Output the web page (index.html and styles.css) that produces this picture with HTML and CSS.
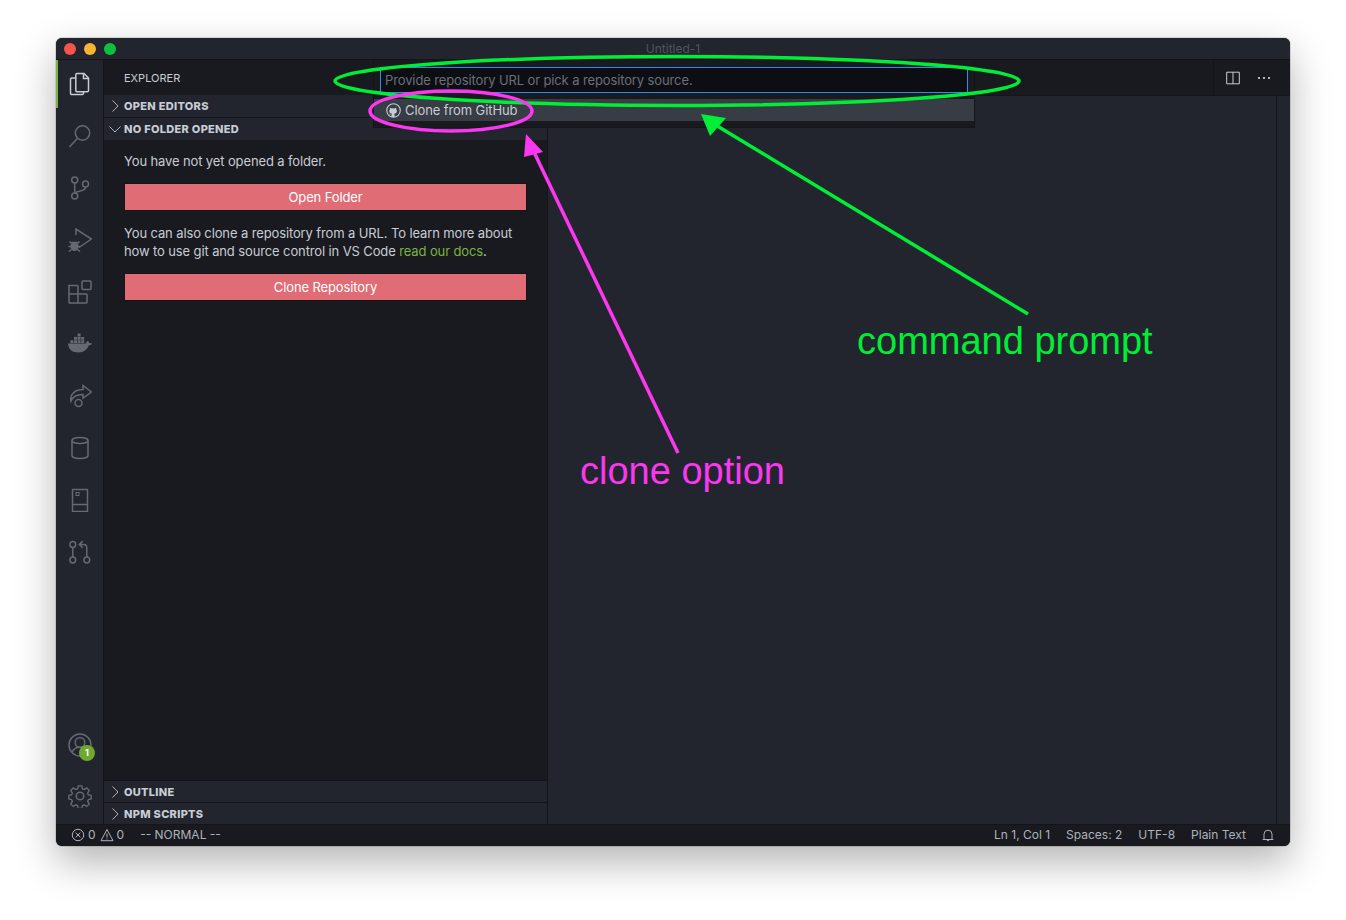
FILE: index.html
```html
<!DOCTYPE html>
<html lang="en">
<head>
<meta charset="utf-8">
<title>Untitled-1</title>
<link rel="stylesheet" href="styles.css">
</head>
<body>
<div class="window">
  <header class="titlebar">
    <div class="lights"><span class="light red"></span><span class="light yellow"></span><span class="light green"></span></div>
    <div class="title">Untitled-1</div>
  </header>
  <div class="main">
    <nav class="activity">
      <div class="act-top">
        <div class="act-item active"><svg viewBox="0 0 24 24" class="ic bright"><path d="M9 1.500h7l4.500 4.500v12.500a1.200 1.200 0 0 1-1.200 1.200H9a1.200 1.200 0 0 1-1.200-1.200V2.700A1.200 1.200 0 0 1 9 1.500z"/><path d="M15.500 1.500v5h5"/><path d="M7.800 6H3.700a1.200 1.200 0 0 0-1.200 1.200v14.100a1.200 1.200 0 0 0 1.200 1.200h10.600a1.200 1.200 0 0 0 1.200-1.200v-1.600"/></svg></div>
        <div class="act-item"><svg viewBox="0 0 24 24" class="ic"><circle cx="14.500" cy="9" r="7.200"/><path d="M9.500 14.200 1.500 23"/></svg></div>
        <div class="act-item"><svg viewBox="0 0 24 24" class="ic"><circle cx="6.700" cy="4" r="3"/><circle cx="6.700" cy="20" r="3"/><circle cx="17.500" cy="8" r="3"/><path d="M6.700 7v10M17.500 11c0 3.300-3.500 3.700-6 4.200-2.200.4-4 .8-4.800 1.800"/></svg></div>
        <div class="act-item"><svg viewBox="0 0 24 24" class="ic"><path d="M8 7V1L23.500 11 11 19.500"/><ellipse cx="6.500" cy="18.500" rx="3.300" ry="3.800" class="bug"/><path d="M3.500 14.500h6M1.500 13.500l2 2M11.500 13.500l-2 2M.5 18.500h2.500M10 18.500h2.500M1 23.500l2.500-2M12 23.500l-2.500-2"/></svg></div>
        <div class="act-item"><svg viewBox="0 0 24 24" class="ic"><path d="M1 5.500h8.200a.8.800 0 0 1 .8.800v16.700H1.800a.8.800 0 0 1-.8-.8z"/><path d="M1 14h17.200a.8.800 0 0 1 .8.800v7.400a.8.800 0 0 1-.8.800H10"/><rect x="14" y="1" width="9" height="8.500" rx="1"/></svg></div>
        <div class="act-item"><svg viewBox="0 0 24 24" class="ic solid"><path d="M0 11.500h18c.1-1.300 1-2.500 2-2.500.7.500 1.100 1.400 1.100 2.200.9-.3 2.200-.2 2.900.6-.7 1.200-1.900 1.500-3.200 1.500-1.400 4.100-5 7.200-10.300 7.200C4 20.500.4 17.300 0 11.500z"/><path d="M2.400 8.200h3v2.800h-3zM6 8.200h3v2.800H6zM9.600 8.200h3v2.800h-3zM13.200 8.200h3v2.800h-3zM6 4.900h3v2.800H6zM9.600 4.900h3v2.800h-3zM13.200 4.900h3v2.800h-3zM9.600 1.600h3v2.800h-3z"/></svg></div>
        <div class="act-item"><svg viewBox="0 0 24 24" class="ic"><path d="M15 1.500 23.500 8 15 14v-3.500c-5 0-10 1-12 6.500C1.500 10 7.500 5.500 15 5.500z"/><circle cx="10.500" cy="19" r="3.500"/></svg></div>
        <div class="act-item"><svg viewBox="0 0 24 24" class="ic"><ellipse cx="12" cy="4.500" rx="8" ry="3"/><path d="M4 4.500v15c0 1.700 3.600 3 8 3s8-1.300 8-3v-15"/></svg></div>
        <div class="act-item"><svg viewBox="0 0 24 24" class="ic"><rect x="4.500" y="1.500" width="15" height="22"/><path d="M4.500 16.500h15"/><rect x="8" y="4.500" width="3" height="3" class="thin"/></svg></div>
        <div class="act-item"><svg viewBox="0 0 24 24" class="ic"><circle cx="4.800" cy="4.500" r="2.900"/><circle cx="4.800" cy="20" r="2.900"/><circle cx="18.800" cy="20" r="2.900"/><path d="M4.800 7.400v9.700M18.800 17.100V8c0-2-1-3.500-3-3.500h-4M14.800 1 11.300 4.500 14.800 8"/></svg></div>
      </div>
      <div class="act-bottom">
        <div class="act-item account"><svg viewBox="0 0 24 24" class="ic"><circle cx="12" cy="12" r="11"/><circle cx="12" cy="9.500" r="4.800"/><path d="M3.800 19.500c1.500-3.500 4.500-5.300 8.200-5.300s6.700 1.800 8.200 5.300"/></svg><span class="badge">1</span></div>
        <div class="act-item"><svg viewBox="0 0 24 24" class="ic"><path d="M10 .8h4l.6 3.200 2 .9 2.800-1.800 2.800 2.800-1.800 2.800.8 2 3 .6v4l-3 .6-.8 2 1.800 2.800-2.800 2.800-2.800-1.800-2 .9-.6 3h-4l-.6-3-2-.9-2.800 1.800-2.800-2.800 1.800-2.800-.9-2-3-.6v-4l3-.6.9-2-1.800-2.800 2.800-2.800 2.800 1.800 2-.9z" transform="translate(1.100 1.100) scale(.91)"/><circle cx="12" cy="12" r="3.800"/></svg></div>
      </div>
    </nav>
    <aside class="sidebar">
      <div class="side-head">EXPLORER</div>
      <div class="sec first"><svg class="chev" viewBox="0 0 12 12"><path d="M3.500 .5 9 6 3.500 11.500"/></svg><span>OPEN EDITORS</span></div>
      <div class="sec open"><svg class="chev" viewBox="0 0 12 12"><path d="M.5 3.500 6 9 11.500 3.500"/></svg><span>NO FOLDER OPENED</span></div>
      <div class="welcome">
        <p class="line-one">You have not yet opened a folder.</p>
        <button class="btn">Open Folder</button>
        <p class="line-two">You can also clone a repository from a URL. To learn more about<br>how to use git and source control in VS Code <a class="link">read our docs</a>.</p>
        <button class="btn">Clone Repository</button>
      </div>
      <div class="sec tail"><svg class="chev" viewBox="0 0 12 12"><path d="M3.500 .5 9 6 3.500 11.500"/></svg><span>OUTLINE</span></div>
      <div class="sec tail"><svg class="chev" viewBox="0 0 12 12"><path d="M3.500 .5 9 6 3.500 11.500"/></svg><span>NPM SCRIPTS</span></div>
    </aside>
    <section class="editor">
      <div class="tabs">
        <div class="tab-actions">
          <svg viewBox="0 0 14 14" class="split"><path d="M.7 1.200h12.600v11.600H.7zM7 1.200v11.600"/></svg>
          <span class="more"><i></i><i></i><i></i></span>
        </div>
      </div>
      <div class="pane"><div class="scrollgutter"></div></div>
    </section>
  </div>
  <footer class="status">
    <div class="st-left">
      <span class="st-group"><svg viewBox="0 0 14 14" class="st-ic"><circle cx="7" cy="7" r="5.700"/><path d="M4.700 4.700l4.600 4.600M9.300 4.700 4.700 9.300"/></svg>0<svg viewBox="0 0 14 14" class="st-ic warn"><path d="M7 1.500 13 12.700H1zM7 5.500v4M7 10.500v1"/></svg>0</span>
      <span>-- NORMAL --</span>
    </div>
    <div class="st-right">
      <span>Ln 1, Col 1</span><span>Spaces: 2</span><span>UTF-8</span><span>Plain Text</span>
      <svg viewBox="0 0 14 14" class="st-ic bell"><path d="M3 10.500V6.200a4 4 0 0 1 8 0v4.300l1 1H2zM5.700 11.800a1.400 1.400 0 0 0 2.600 0"/></svg>
    </div>
  </footer>
  <div class="quick">
    <div class="quick-input">Provide repository URL or pick a repository source.</div>
    <div class="quick-row">
      <svg viewBox="0 0 16 16" class="gh"><circle cx="8" cy="8" r="7.200" class="gh-ring"/><path d="M5.800 15v-2.200c-1.800.3-2.300-.8-2.600-1.300.8 0 1.200.7 1.500 1 .4.300.9.200 1.200 0 0-.4.200-.8.500-1-1.800-.2-2.900-1.100-2.900-3 0-.7.200-1.300.7-1.800-.1-.5-.1-1.100.1-1.600.6 0 1.200.3 1.700.7a6.500 6.500 0 0 1 3.100 0c.5-.4 1.100-.7 1.700-.7.200.5.200 1.100.1 1.600.5.500.7 1.100.7 1.800 0 1.900-1.100 2.800-2.900 3 .3.300.5.700.5 1.300V15z"/></svg>
      <span>Clone from GitHub</span>
    </div>
  </div>
</div>
<svg class="marks" viewBox="0 0 1346 920" width="1346" height="920">
  <ellipse cx="677" cy="81" rx="342" ry="24.500" class="mark-green"/>
  <ellipse cx="451" cy="111" rx="81" ry="20" class="mark-pink"/>
  <path d="M1028 314 714 124" class="mark-green"/>
  <path d="M701 114 726 118 710 136z" class="fill-green"/>
  <path d="M678 453 533 150" class="mark-pink"/>
  <path d="M526 134 543 152 524 157z" class="fill-pink"/>
</svg>
<div class="note note-green">command prompt</div>
<div class="note note-pink">clone option</div>
</body>
</html>
```
FILE: styles.css
```css
* { box-sizing: border-box; }
html, body { margin: 0; height: 100%; }
body {
  width: 1346px;
  height: 920px;
  padding: 38px 56px 74px;
  background: #fff;
  font-family: Inter, "Liberation Sans", sans-serif;
  overflow: hidden;
  position: relative;
}
.window {
  position: relative;
  width: 1234px;
  height: 808px;
  display: flex;
  flex-direction: column;
  border-radius: 6px;
  overflow: hidden;
  background: #22252e;
  color: #c8ccd4;
  box-shadow: 0 0 0 1px rgba(0,0,0,.12), 0 16px 40px rgba(0,0,0,.3);
}
.titlebar {
  flex: 0 0 22px;
  display: flex;
  align-items: center;
  position: relative;
  background: #22252e;
  border-bottom: 1px solid #14151a;
}
.lights { display: flex; gap: 8px; padding-left: 8px; }
.light { width: 12px; height: 12px; border-radius: 50%; }
.red { background: #f5544d; }
.yellow { background: #f8b431; }
.green { background: #0dc13d; }
.title {
  position: absolute;
  left: 0; right: 0;
  text-align: center;
  font-size: 12px;
  color: #50545d;
}
.main { flex: 1; display: flex; min-height: 0; }
.activity {
  flex: 0 0 48px;
  display: flex;
  flex-direction: column;
  justify-content: space-between;
  background: #22252e;
  border-right: 1px solid #14151a;
}
.act-item {
  height: 52px;
  display: flex;
  align-items: center;
  justify-content: center;
  position: relative;
}
.act-top .act-item { border-left: 2px solid transparent; padding-right: 2px; }
.act-top .act-item.active { border-left-color: #7cb342; height: 48px; margin-bottom: 2px; }
.act-bottom { padding-bottom: 2px; }
.account { margin-bottom: -1px; }
.ic {
  width: 24px;
  height: 24px;
  fill: none;
  stroke: #646974;
  stroke-width: 1.500;
}
.ic.bright { stroke: #c8ccd4; }
.ic.solid { fill: #646974; stroke: none; }
.ic .thin { stroke-width: 1; }
.ic .bug { fill: #646974; }
.badge {
  position: absolute;
  left: 23px;
  top: 26px;
  width: 16px;
  height: 16px;
  border-radius: 50%;
  background: #6fa82f;
  color: #fff;
  font-size: 9px;
  font-weight: 700;
  line-height: 16px;
  text-align: center;
}
.sidebar {
  flex: 0 0 444px;
  display: flex;
  flex-direction: column;
  background: #191a1f;
  border-right: 1px solid #14151a;
}
.side-head {
  height: 35px;
  padding-left: 20px;
  line-height: 36px;
  font-size: 11px;
  color: #c8ccd4;
}
.sec {
  height: 22px;
  display: flex;
  align-items: center;
  background: #22252e;
  font-size: 11px;
  font-weight: 800;
  letter-spacing: .3px;
  color: #c8ccd4;
  border-bottom: 1px solid #14151a;
}
.sec.first { height: 23px; }
.sec.open { border-bottom: 0; }
.sec.tail { border-top: 1px solid #14151a; border-bottom: 0; }
.chev {
  width: 12px;
  height: 12px;
  margin: 0 3px 0 5px;
  fill: none;
  stroke: #aeb2ba;
  stroke-width: 1;
}
.welcome {
  flex: 1;
  padding: 12px 20px 0;
  font-size: 13px;
  line-height: 18px;
  letter-spacing: -.12px;
  color: #c8ccd4;
}
.welcome p { margin: 0; }
.welcome .line-one { height: 18px; margin-bottom: 13px; }
.welcome .line-two { margin: 13px 0; }
.btn {
  display: block;
  width: 403px;
  height: 28px;
  padding: 0;
  background: #e06c75;
  color: #fff;
  border: 1px solid #14151a;
  font: inherit;
  letter-spacing: inherit;
  text-align: center;
}
.link { color: #7cb342; }
.editor { flex: 1; display: flex; flex-direction: column; min-width: 0; }
.tabs {
  height: 36px;
  display: flex;
  justify-content: flex-end;
  background: #191a1f;
  border-bottom: 1px solid #14151a;
}
.tab-actions {
  width: 77px;
  border-left: 1px solid #14151a;
  display: flex;
  align-items: center;
  padding-left: 12px;
  gap: 18px;
  height: 35px;
}
.split { width: 14px; height: 14px; fill: none; stroke: #c8ccd4; stroke-width: 1; }
.more { display: flex; gap: 3px; }
.more i { width: 2px; height: 2px; background: #b0b3ba; }
.pane { flex: 1; background: #22252e; display: flex; justify-content: flex-end; }
.scrollgutter { width: 14px; border-left: 1px solid #14151a; }
.status {
  flex: 0 0 22px;
  display: flex;
  align-items: center;
  justify-content: space-between;
  background: #191a1f;
  border-top: 1px solid #14151a;
  font-size: 12px;
  color: #aeb2ba;
  padding: 0 15px 2px;
}
.st-left { display: flex; gap: 16px; align-items: center; }
.st-group { display: flex; align-items: center; gap: 3px; }
.st-right { display: flex; gap: 16px; align-items: center; }
.st-ic { width: 14px; height: 14px; fill: none; stroke: #aeb2ba; stroke-width: 1; }
.warn { margin-left: 1px; }
.bell { margin-left: -1px; }
.quick {
  position: absolute;
  left: 317px;
  top: 22px;
  width: 602px;
  height: 68px;
  padding: 6px 6px 0;
  background: #191a1f;
  border: 1px solid #14151a;
  border-top: 0;
}
.quick-input {
  height: 26px;
  margin-top: 1px;
  border: 1px solid #2d8cf0;
  background: #0d0e14;
  padding-left: 4px;
  font-size: 13px;
  line-height: 24px;
  letter-spacing: -.12px;
  color: #6b6f78;
}
.quick-row {
  height: 22px;
  margin: 6px -6px 0;
  padding-left: 12px;
  display: flex;
  align-items: center;
  gap: 4px;
  background: #383c44;
  font-size: 13px;
  letter-spacing: -.1px;
  color: #c8ccd4;
}
.gh { width: 15px; height: 15px; fill: #c8ccd4; }
.gh-ring { fill: none; stroke: #c8ccd4; stroke-width: 1.200; }
.marks {
  position: absolute;
  left: 0;
  top: 0;
  pointer-events: none;
}
.mark-green { fill: none; stroke: #00ee35; stroke-width: 3.500; }
.mark-pink { fill: none; stroke: #fb37f0; stroke-width: 3.500; }
.fill-green { fill: #00ee35; }
.fill-pink { fill: #fb37f0; }
.note {
  position: absolute;
  font-family: "Liberation Sans", Arial, sans-serif;
  font-size: 38px;
  line-height: 44px;
  white-space: nowrap;
}
.note-green { left: 857px; top: 319px; color: #00ee35; }
.note-pink { left: 580px; top: 449px; color: #fb37f0; }
```
